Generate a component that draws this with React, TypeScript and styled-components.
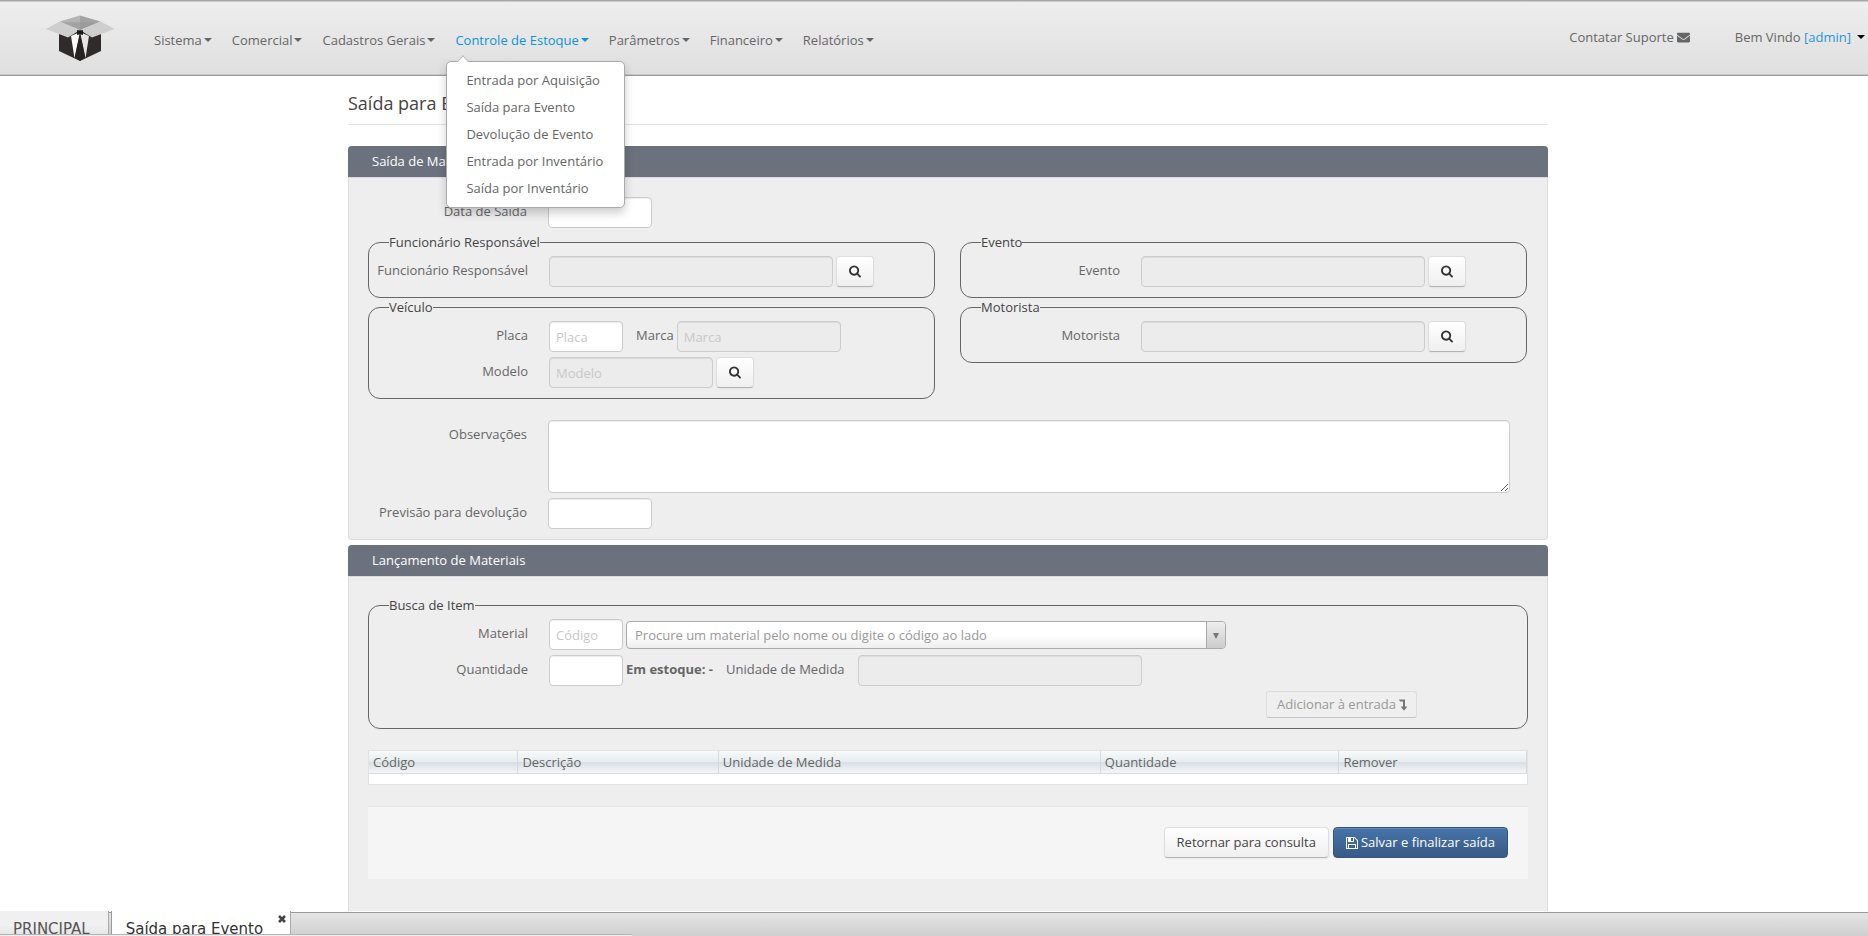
import React from 'react';
import styled, { createGlobalStyle, css } from 'styled-components';
import { FaEnvelope } from 'react-icons/fa';

const Global = createGlobalStyle`
  *, *::before, *::after { box-sizing: border-box; }
  html, body { height: 100%; }
  body {
    margin: 0;
    background: #fff;
    color: #666;
    font: 13px/20px "Open Sans", Arial, sans-serif;
  }
  #root { height: 100%; }
  input, button, textarea, select { font: inherit; color: inherit; margin: 0; }
  a { color: inherit; text-decoration: none; }
`;

const Screen = styled.div`
  display: flex;
  flex-direction: column;
  height: 100vh;
  overflow: hidden;
`;

const Header = styled.header`
  position: relative;
  z-index: 2;
  flex: none;
  display: flex;
  align-items: center;
  height: 76px;
  padding: 0 3px 0 46px;
  background: linear-gradient(#eee, #dfdfdf);
  border-top: 1px solid #a5a5a5;
  border-bottom: 1px solid #999;
  box-shadow: inset 0 1px #ccc, inset 0 -1px #c8c8c8;
`;

const Logo = styled.a`
  display: block;
  width: 70px;
  height: 46px;
  margin-right: 38px;
  svg { display: block; }
`;

const Nav = styled.nav`
  flex: 1;
  ul { list-style: none; margin: 0; padding: 0; }
  > ul { display: flex; gap: 20px; padding-top: 3px; }
`;

const NavItem = styled.li`
  position: relative;
`;

const Caret = styled.span`
  display: inline-block;
  margin-left: 2px;
  vertical-align: 3px;
  border: 4px solid transparent;
  border-top-color: currentColor;
  border-bottom: 0;
`;

const NavLink = styled.a<{ $open?: boolean }>`
  white-space: nowrap;
  color: ${p => (p.$open ? '#0b94da' : '#666')};
`;

const Menu = styled.ul`
  && {
    position: absolute;
    top: 31px;
    left: -9px;
    width: 179px;
    height: 147px;
    padding: 5px 0;
    background: #fff;
    border: 1px solid #aaa;
    border-radius: 5px;
    box-shadow: 0 5px 10px rgba(0, 0, 0, 0.2);
  }
  &::before {
    content: '';
    position: absolute;
    top: -5px;
    left: 12px;
    width: 8px;
    height: 8px;
    background: #fff;
    border: solid #bbb;
    border-width: 1px 0 0 1px;
    transform: rotate(45deg);
  }
  a { display: block; padding: 3px 19px 4px; white-space: nowrap; }
`;

const UserArea = styled.div`
  display: flex;
  gap: 45px;
  padding-bottom: 2px;
  white-space: nowrap;
  svg { vertical-align: -2px; margin-left: 3px; }
  b { font-weight: 400; color: #1f97d8; }
  ${Caret} { color: #000; margin-left: 6px; }
`;

const Main = styled.main`
  flex: 1;
  min-height: 0;
  overflow: hidden;
  padding-left: 28px;
`;

const Container = styled.div`
  width: calc(100% - 40px);
  max-width: 1200px;
  margin: 0 auto;
`;

const Title = styled.h1`
  margin: 0 0 21px;
  padding: 15px 0 8px;
  border-bottom: 1px solid #e2e2e2;
  color: #444;
  font-size: 18px;
  line-height: 25px;
  font-weight: 400;
`;

const Panel = styled.section<{ $tall?: boolean }>`
  margin-bottom: 5px;
  background: #eee;
  border: 1px solid #dcdcdc;
  border-top: 0;
  border-radius: 4px;
  ${p => p.$tall && css`min-height: 420px;`}
`;

const PanelTitle = styled.h2`
  margin: 0 -1px;
  padding: 5px 24px 6px;
  background: #6b727e;
  color: #fff;
  font-size: 13px;
  line-height: 20px;
  font-weight: 400;
  border-radius: 4px 4px 0 0;
`;

const PanelBody = styled.div<{ $spaced?: boolean }>`
  padding: ${p => (p.$spaced ? '19px 19px 32px' : '19px 19px 10px')};
  border-top: 1px solid #dcdcdc;
`;

const Columns = styled.div`
  display: grid;
  grid-template-columns: repeat(2, 1fr);
  column-gap: 25px;
  align-items: start;
  margin: 5px 1px 21px 0;
`;

const Stack = styled.div`
  display: grid;
`;

const Box = styled.fieldset`
  min-width: 0;
  margin: 0;
  padding: 5px 0 10px;
  border: 1px solid #666;
  border-radius: 12px;
  legend { margin-left: 20px; padding: 0; color: #444; line-height: 18px; }
`;

const Row = styled.div<{ $top?: boolean }>`
  display: flex;
  align-items: ${p => (p.$top ? 'flex-start' : 'center')};
  gap: 3px;
  & + & { margin-top: 5px; }
  > strong { padding-bottom: 3px; white-space: nowrap; }
`;

const Label = styled.label`
  flex: none;
  width: 159px;
  margin-right: 18px;
  padding-bottom: 3px;
  text-align: right;
  white-space: nowrap;
  ${Row}[data-top] & { padding-top: 4px; }
`;

const InlineLabel = styled.label<{ $after?: number }>`
  margin-left: 10px;
  margin-right: ${p => p.$after ?? 0}px;
  padding-bottom: 3px;
  white-space: nowrap;
`;

const field = css`
  border: 1px solid #ccc;
  border-radius: 4px;
  background: #fff;
  box-shadow: inset 0 1px 1px rgba(0, 0, 0, 0.075);
`;

const Input = styled.input<{ $w: number }>`
  ${field}
  flex: 0 1 ${p => p.$w}px;
  width: ${p => p.$w}px;
  min-width: 0;
  height: 31px;
  padding: 4px 6px;
  &:disabled { background: #ececec; }
  &::placeholder { color: #c8c8c8; opacity: 1; }
`;

const TextArea = styled.textarea`
  ${field}
  flex: 1;
  height: 73px;
  margin-right: 18px;
  padding: 4px 6px;
`;

const IconButton = styled.button`
  flex: none;
  display: grid;
  place-items: center;
  width: 38px;
  height: 31px;
  padding: 0;
  color: #333;
  background: linear-gradient(#fff, #efefef);
  border: 1px solid #ddd;
  border-bottom-color: #b3b3b3;
  border-radius: 4px;
  box-shadow: 0 1px 2px rgba(0, 0, 0, 0.05);
`;

const SelectWrap = styled.div`
  position: relative;
  flex: 0 1 600px;
  &::after {
    content: '';
    position: absolute;
    right: 7px;
    top: 12px;
    border: 3px solid transparent;
    border-top: 6px solid #777;
    border-bottom: 0;
    pointer-events: none;
  }
  &::before {
    content: '';
    position: absolute;
    right: 1px;
    top: 1px;
    bottom: 1px;
    width: 19px;
    border-left: 1px solid #aaa;
    border-radius: 0 4px 4px 0;
    background: linear-gradient(#eee, #ccc);
    pointer-events: none;
  }
`;

const Select = styled.select`
  display: block;
  width: 100%;
  height: 28px;
  padding: 1px 8px 0;
  appearance: none;
  color: #999;
  background: linear-gradient(#fff 50%, #eee);
  border: 1px solid #aaa;
  border-radius: 4px;
`;

const AddRow = styled.div`
  display: flex;
  justify-content: flex-end;
  margin-top: 5px;
  padding-right: 110px;
`;

const AddButton = styled.button`
  height: 27px;
  padding: 0 9px 2px 10px;
  background: #efefef;
  border: 1px solid #ddd;
  border-bottom-color: #c4c4c4;
  border-radius: 3px;
  color: #999;
  white-space: nowrap;
  svg { vertical-align: -2px; margin-left: 3px; color: #777; }
`;

const Table = styled.table`
  width: 100%;
  margin-top: 21px;
  border: 1px solid #e2e2e2;
  border-collapse: separate;
  border-spacing: 0;
  background: #fff;
  table-layout: fixed;
  th {
    height: 23px;
    padding: 0 4px 1px;
    text-align: left;
    font-weight: 400;
    line-height: 20px;
    background: linear-gradient(#f8fafa, #e6ecef 50%, #d8e0e5 52%, #f4f6f7);
    border-bottom: 1px solid #d9dcde;
    border-right: 1px solid #d5dade;
  }
  td { height: 10px; padding: 0; }
`;

const Actions = styled.div`
  display: flex;
  justify-content: flex-end;
  gap: 4px;
  margin-top: 21px;
  padding: 20px 20px 21px;
  background: #f5f5f5;
  border-top: 1px solid #e5e5e5;
`;

const Button = styled.button<{ $primary?: boolean }>`
  height: 31px;
  padding: 0 12px 2px;
  color: #444;
  background: linear-gradient(#fff, #efefef);
  border: 1px solid #ddd;
  border-bottom-color: #b3b3b3;
  border-radius: 4px;
  white-space: nowrap;
  box-shadow: 0 1px 2px rgba(0, 0, 0, 0.05);
  ${p => p.$primary && css`
    color: #fff;
    background: linear-gradient(#4574a8, #3a5a86);
    border-color: #34557f;
    box-shadow: inset 0 1px rgba(255, 255, 255, 0.15);
  `}
  svg { vertical-align: -2px; margin-right: 3px; }
`;

const TabBar = styled.footer`
  position: relative;
  flex: none;
  display: flex;
  height: 25px;
  overflow: hidden;
  font: 15px/20px "DejaVu Sans", Verdana, sans-serif;
  background: linear-gradient(#999 0 1px, #e4e4e4 1px, #cecece);
  background-position: 0 1px;
  background-repeat: no-repeat;
  &::after {
    content: '';
    position: absolute;
    left: 0;
    bottom: 0;
    width: 633px;
    height: 2px;
    background: #eee;
    border-top: 1px solid #b4b4b4;
    border-radius: 0 3px 0 0;
  }
`;

const Tab = styled.div<{ $active?: boolean }>`
  display: flex;
  align-items: flex-start;
  padding: 8px 18px 0 13px;
  white-space: nowrap;
  background: linear-gradient(#f0f0f0 60%, #e4e4e4);
  border-right: 1px solid #aaa;
  color: #555;
  ${p => p.$active && css`
    margin-left: 2px;
    padding: 8px 4px 0 14px;
    border-left: 1px solid #999;
    background: #fff;
    color: #333;
  `}
`;

const CloseButton = styled.button`
  display: block;
  height: 8px;
  margin: -4px 0 0 15px;
  padding: 0;
  border: 0;
  background: none;
  line-height: 0;
`;

const BoxLogo = () => (
  <svg width="70" height="46" viewBox="0 0 70 46" role="img" aria-label="Início">
    <path d="M13 18v18l21 10 21-10V18L34 14z" fill="#2f2b2a" />
    <path d="M13.500 6.500 34 .5v14.500z" fill="#b4b4b4" />
    <path d="M54.500 6.500 34 .5v14.500z" fill="#a3a3a3" />
    <path d="M34 7 15 7.500 34 15 53 7.500z" fill="#989898" opacity=".6" />
    <path d="M25 21 34 17 28.500 43z" fill="#fbfbfb" />
    <path d="M43 21 34 17 39.500 43z" fill="#e6e6e6" />
    <path d="M34 18 29 41.500 34 46 39 41.500z" fill="#262222" />
    <path d="M13.500 6.500 34 15 22 22.500 0 14z" fill="#cecece" />
    <path d="M54.500 6.500 34 15 46 22.500 68.500 14z" fill="#cecece" />
    <path d="M31.500 15.500 34 16.500l2.500-1v4L34 18.500l-2.500 1z" fill="#1b1818" stroke="#1b1818" />
  </svg>
);

const SearchIcon = () => (
  <svg width="12" height="13" viewBox="0 128 1664 1664" fill="currentColor" aria-hidden="true">
    <path d="M1152 832q0-185-131.500-316.500t-316.500-131.500-316.500 131.500-131.500 316.500 131.500 316.500 316.500 131.500 316.500-131.500 131.500-316.500zm512 832q0 52-38 90t-90 38q-54 0-90-38l-343-342q-179 124-399 124-143 0-273.500-55.500t-225-150-150-225-55.500-273.500 55.500-273.500 150-225 225-150 273.500-55.500 273.500 55.500 225 150 150 225 55.500 273.500q0 220-124 399l343 343q37 37 37 90z" />
  </svg>
);

const SaveIcon = () => (
  <svg width="12" height="12" viewBox="0 128 1536 1536" fill="currentColor" aria-hidden="true">
    <path d="M384 1536h768v-384h-768v384zm896 0h128v-896q0-14-10-38.500t-20-34.500l-281-281q-10-10-34-20t-39-10v416q0 40-28 68t-68 28h-576q-40 0-68-28t-28-68v-416h-128v1280h128v-416q0-40 28-68t68-28h832q40 0 68 28t28 68v416zm-384-928v-320q0-13-9.500-22.500t-22.500-9.500h-192q-13 0-22.500 9.500t-9.500 22.500v320q0 13 9.500 22.500t22.500 9.500h192q13 0 22.500-9.500t9.500-22.500zm640 32v928q0 40-28 68t-68 28h-1344q-40 0-68-28t-28-68v-1344q0-40 28-68t68-28h928q40 0 88 20t76 48l280 280q28 28 48 76t20 88z" />
  </svg>
);

const LevelDownIcon = () => (
  <svg width="8" height="12" viewBox="0 192 1024 1536" fill="currentColor" aria-hidden="true">
    <path d="M32 256h704q13 0 22.500 9.500t9.500 22.500v863h192q40 0 58 37 17 37-9 68l-320 384q-18 22-49 22t-49-22l-320-384q-27-32-9-68 18-37 58-37h192v-640h-320q-14 0-25-11l-160-192q-13-14-4-34 9-19 29-19z" />
  </svg>
);

const CloseIcon = () => (
  <svg width="8" height="8" viewBox="0 0 8 8" aria-hidden="true">
    <path d="M1 1 7 7M7 1 1 7" stroke="#444" strokeWidth="2.6" />
  </svg>
);

const menuItems = [
  'Entrada por Aquisição',
  'Saída para Evento',
  'Devolução de Evento',
  'Entrada por Inventário',
  'Saída por Inventário',
];

const navItems = [
  'Sistema',
  'Comercial',
  'Cadastros Gerais',
  'Controle de Estoque',
  'Parâmetros',
  'Financeiro',
  'Relatórios',
];

const Lookup = ({ id, label }: { id: string; label: string }) => (
  <Box>
    <legend>{label}</legend>
    <Row>
      <Label htmlFor={id}>{label}</Label>
      <Input id={id} $w={284} disabled />
      <IconButton type="button" aria-label={`Buscar ${label}`}><SearchIcon /></IconButton>
    </Row>
  </Box>
);

export default function App() {
  return (
    <Screen>
      <Global />
      <Header>
        <Logo href="#inicio"><BoxLogo /></Logo>
        <Nav>
          <ul>
            {navItems.map(item => {
              const open = item === 'Controle de Estoque';
              return (
                <NavItem key={item}>
                  <NavLink href="#menu" $open={open}>{item}<Caret /></NavLink>
                  {open && (
                    <Menu>
                      {menuItems.map(m => <li key={m}><a href="#item">{m}</a></li>)}
                    </Menu>
                  )}
                </NavItem>
              );
            })}
          </ul>
        </Nav>
        <UserArea>
          <a href="#suporte">Contatar Suporte<FaEnvelope size={13} /></a>
          <a href="#conta">Bem Vindo <b>[admin]</b><Caret /></a>
        </UserArea>
      </Header>

      <Main>
        <Container>
          <Title>Saída para Evento</Title>

          <Panel>
            <PanelTitle>Saída de Materiais</PanelTitle>
            <PanelBody>
              <Row>
                <Label htmlFor="saida">Data de Saída</Label>
                <Input id="saida" $w={104} />
              </Row>
              <Columns>
                <Stack>
                  <Lookup id="funcionario" label="Funcionário Responsável" />
                  <Box>
                    <legend>Veículo</legend>
                    <Row>
                      <Label htmlFor="placa">Placa</Label>
                      <Input id="placa" $w={74} placeholder="Placa" />
                      <InlineLabel htmlFor="marca">Marca</InlineLabel>
                      <Input id="marca" $w={164} placeholder="Marca" disabled />
                    </Row>
                    <Row>
                      <Label htmlFor="modelo">Modelo</Label>
                      <Input id="modelo" $w={164} placeholder="Modelo" disabled />
                      <IconButton type="button" aria-label="Buscar veículo"><SearchIcon /></IconButton>
                    </Row>
                  </Box>
                </Stack>
                <Stack>
                  <Lookup id="evento" label="Evento" />
                  <Lookup id="motorista" label="Motorista" />
                </Stack>
              </Columns>
              <Row $top data-top>
                <Label htmlFor="obs">Observações</Label>
                <TextArea id="obs" />
              </Row>
              <Row>
                <Label htmlFor="previsao">Previsão para devolução</Label>
                <Input id="previsao" $w={104} />
              </Row>
            </PanelBody>
          </Panel>

          <Panel $tall>
            <PanelTitle>Lançamento de Materiais</PanelTitle>
            <PanelBody $spaced>
              <Box>
                <legend>Busca de Item</legend>
                <Row>
                  <Label htmlFor="codigo">Material</Label>
                  <Input id="codigo" $w={74} placeholder="Código" />
                  <SelectWrap>
                    <Select aria-label="Material">
                      <option>Procure um material pelo nome ou digite o código ao lado</option>
                    </Select>
                  </SelectWrap>
                </Row>
                <Row>
                  <Label htmlFor="quantidade">Quantidade</Label>
                  <Input id="quantidade" $w={74} />
                  <strong>Em estoque: -</strong>
                  <InlineLabel htmlFor="unidade" $after={10}>Unidade de Medida</InlineLabel>
                  <Input id="unidade" $w={284} disabled />
                </Row>
                <AddRow>
                  <AddButton type="button" disabled>Adicionar à entrada<LevelDownIcon /></AddButton>
                </AddRow>
              </Box>
              <Table>
                <colgroup>
                  <col style={{ width: '12.9%' }} />
                  <col style={{ width: '17.3%' }} />
                  <col style={{ width: '33%' }} />
                  <col style={{ width: '20.6%' }} />
                  <col />
                </colgroup>
                <thead>
                  <tr>
                    <th>Código</th><th>Descrição</th><th>Unidade de Medida</th><th>Quantidade</th><th>Remover</th>
                  </tr>
                </thead>
                <tbody><tr><td colSpan={5} /></tr></tbody>
              </Table>
              <Actions>
                <Button type="button">Retornar para consulta</Button>
                <Button type="button" $primary><SaveIcon />Salvar e finalizar saída</Button>
              </Actions>
            </PanelBody>
          </Panel>
        </Container>
      </Main>

      <TabBar>
        <Tab>PRINCIPAL</Tab>
        <Tab $active>
          Saída para Evento
          <CloseButton type="button" aria-label="Fechar"><CloseIcon /></CloseButton>
        </Tab>
      </TabBar>
    </Screen>
  );
}
